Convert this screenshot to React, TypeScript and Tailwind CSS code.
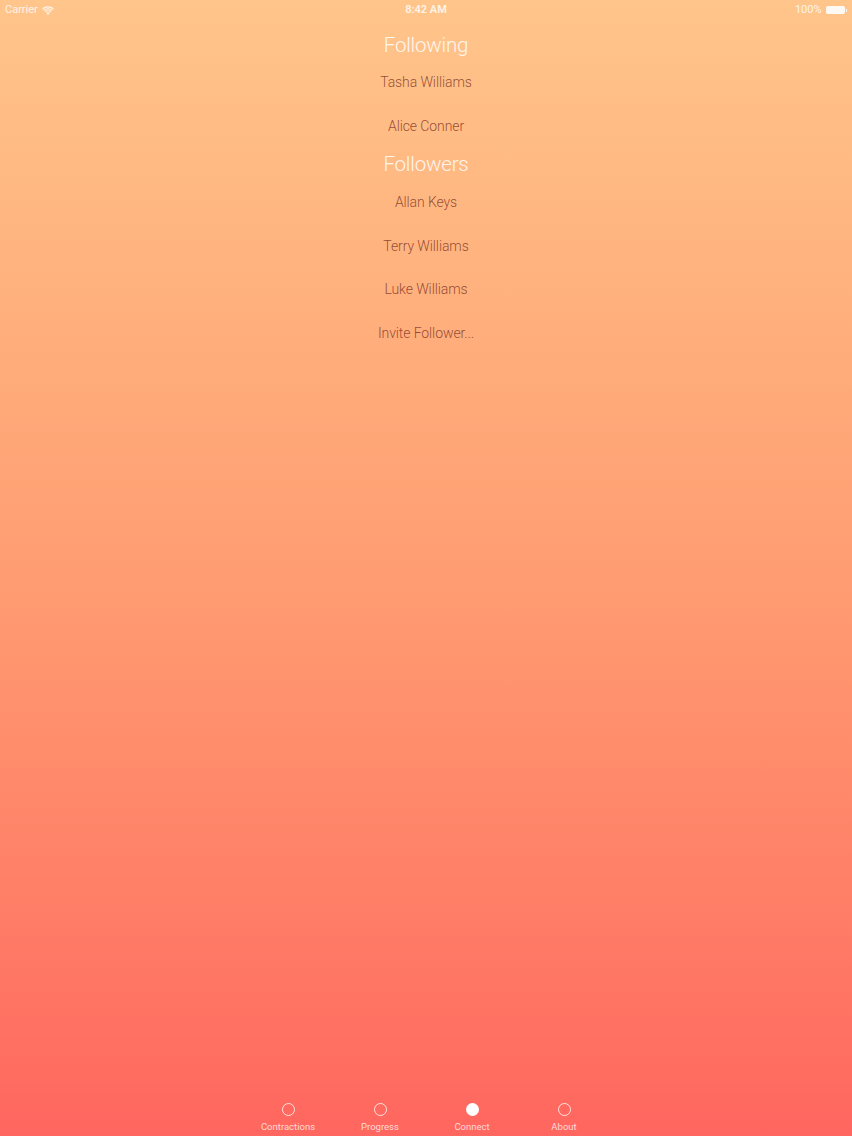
import React from 'react';

const following = ['Tasha Williams', 'Alice Conner'];
const followers = ['Allan Keys', 'Terry Williams', 'Luke Williams', 'Invite Follower...'];
const tabs = [
  { label: 'Contractions', active: false },
  { label: 'Progress', active: false },
  { label: 'Connect', active: true },
  { label: 'About', active: false },
];

const font = { fontFamily: '"Helvetica Neue", Roboto, "Liberation Sans", sans-serif' };

function StatusBar() {
  return (
    <div className="h-5 flex items-center justify-between px-[5px] text-[11px] text-white/80 font-[Roboto,sans-serif]">
      <div className="flex items-center gap-1 w-[120px]">
        <span>Carrier</span>
        <svg width="12" height="9" viewBox="0 0 12 9" className="fill-white/80">
          <path d="M6 9 L4.2 7 A2.6 2.6 0 0 1 7.8 7 Z" />
          <path d="M2.8 5.6 A4.6 4.6 0 0 1 9.2 5.6 L8.4 6.4 A3.4 3.4 0 0 0 3.6 6.4 Z" />
          <path d="M1.3 4.1 A6.8 6.8 0 0 1 10.7 4.1 L9.9 4.9 A5.6 5.6 0 0 0 2.1 4.9 Z" />
          <path d="M0 2.6 A8.8 8.8 0 0 1 12 2.6 L11.2 3.4 A7.7 7.7 0 0 0 0.8 3.4 Z" />
        </svg>
      </div>
      <span className="font-semibold">8:42 AM</span>
      <div className="flex items-center justify-end gap-1 w-[120px]">
        <span>100%</span>
        <div className="flex items-center">
          <div className="w-[19px] h-[8px] bg-white/90 rounded-[2px]" />
          <div className="w-[1.5px] h-[3px] bg-white/80 ml-[1px]" />
        </div>
      </div>
    </div>
  );
}

function Name({ children }: { children: React.ReactNode }) {
  return (
    <div className="h-[43.5px] flex items-center justify-center text-[14px] font-light text-[#7a3022]/80 tracking-[-0.1px]">
      {children}
    </div>
  );
}

function Header({ children }: { children: React.ReactNode }) {
  return (
    <div className="h-[38px] flex items-center justify-center text-[20.5px] font-light text-white/85 tracking-[-0.2px]">
      {children}
    </div>
  );
}

export default function App() {
  return (
    <div
      className="w-[852px] h-[1136px] flex flex-col bg-gradient-to-b from-[#ffc58a] via-[#ff9d72] to-[#ff665f] overflow-hidden"
      style={font}
    >
      <StatusBar />
      <div className="flex flex-col pt-[6px]">
        <Header>Following</Header>
        <div className="-mt-[3px]">
          {following.map((n) => (
            <Name key={n}>{n}</Name>
          ))}
        </div>
        <div className="-mt-[3px]">
          <Header>Followers</Header>
        </div>
        <div className="-mt-[2px]">
          {followers.map((n) => (
            <Name key={n}>{n}</Name>
          ))}
        </div>
      </div>
      <div className="flex-1" />
      <div className="h-[40px] flex justify-center">
        {tabs.map((t) => (
          <div key={t.label} className="w-[92px] flex flex-col items-center pt-[7px]">
            <div
              className={`w-[13px] h-[13px] rounded-full border border-white/80 ${t.active ? 'bg-white' : ''}`}
            />
            <span className="text-[9.5px] text-white/75 mt-[6px] leading-none">{t.label}</span>
          </div>
        ))}
      </div>
    </div>
  );
}
